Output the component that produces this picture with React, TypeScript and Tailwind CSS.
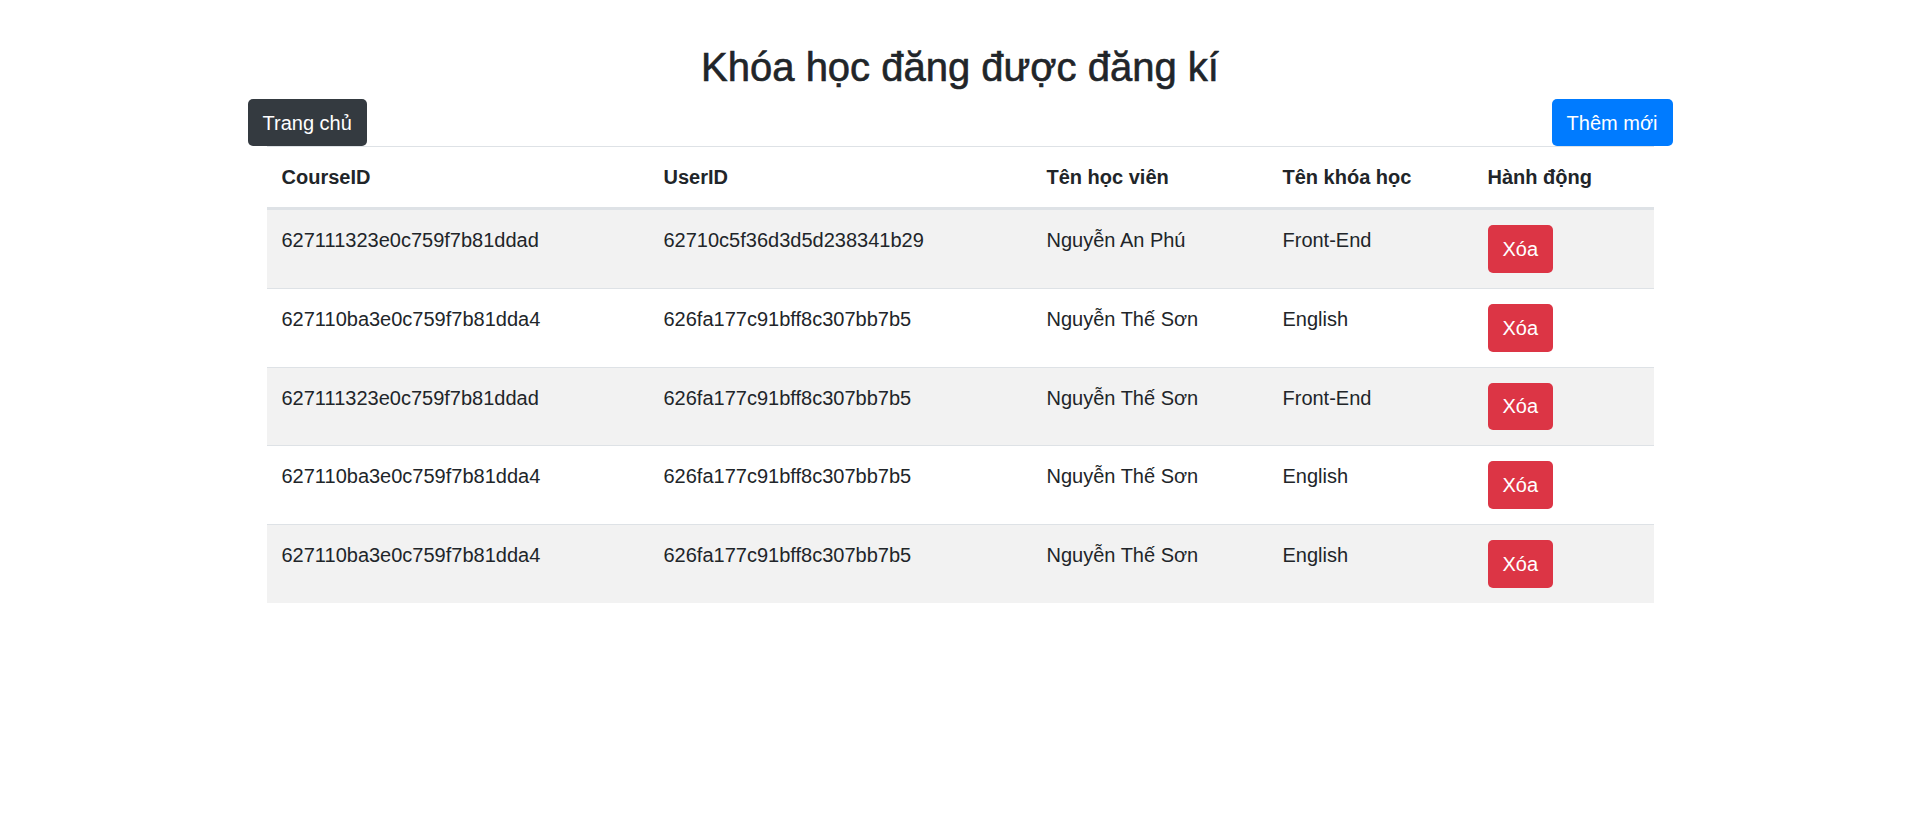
import React from 'react'

const rows = [
  { courseId: '627111323e0c759f7b81ddad', userId: '62710c5f36d3d5d238341b29', student: 'Nguyễn An Phú', course: 'Front-End' },
  { courseId: '627110ba3e0c759f7b81dda4', userId: '626fa177c91bff8c307bb7b5', student: 'Nguyễn Thế Sơn', course: 'English' },
  { courseId: '627111323e0c759f7b81ddad', userId: '626fa177c91bff8c307bb7b5', student: 'Nguyễn Thế Sơn', course: 'Front-End' },
  { courseId: '627110ba3e0c759f7b81dda4', userId: '626fa177c91bff8c307bb7b5', student: 'Nguyễn Thế Sơn', course: 'English' },
  { courseId: '627110ba3e0c759f7b81dda4', userId: '626fa177c91bff8c307bb7b5', student: 'Nguyễn Thế Sơn', course: 'English' },
]

export default function App() {
  return (
    <div className="min-h-[830px] bg-white text-[#212529] text-[20px] leading-[30px] font-['Liberation_Sans',Arial,sans-serif]">
      <h2 className="pt-[43px] text-center text-[40px] leading-[48px] font-medium [-webkit-text-stroke:0.6px_#212529]">
        Khóa học đăng được đăng kí
      </h2>

      <div className="mx-auto w-[1425px] px-[19px]">
        {/* Buttons */}
        <div className="-mx-[19px] flex justify-between items-end h-[48px] mt-[7px]">
          <button className="h-[47px] px-[15px] rounded-[5px] bg-[#343a40] text-white">
            Trang chủ
          </button>
          <button className="h-[47px] px-[15px] rounded-[5px] bg-[#007bff] text-white">
            Thêm mới
          </button>
        </div>

        {/* Table */}
        <table className="w-full border-collapse text-left">
          <colgroup>
            <col className="w-[382px]" />
            <col className="w-[383px]" />
            <col className="w-[236px]" />
            <col className="w-[205px]" />
            <col />
          </colgroup>
          <thead>
            <tr>
              {['CourseID', 'UserID', 'Tên học viên', 'Tên khóa học', 'Hành động'].map((h) => (
                <th
                  key={h}
                  className="border-t border-[#dee2e6] border-b-[3px] border-b-[#dee2e6] px-[15px] py-[15px] font-bold align-bottom"
                >
                  {h}
                </th>
              ))}
            </tr>
          </thead>
          <tbody>
            {rows.map((r, i) => (
              <tr key={i} className={i % 2 === 0 ? 'bg-[#f2f2f2]' : 'bg-white'}>
                <td className="border-t border-[#dee2e6] px-[15px] py-[15px] align-top">{r.courseId}</td>
                <td className="border-t border-[#dee2e6] px-[15px] py-[15px] align-top">{r.userId}</td>
                <td className="border-t border-[#dee2e6] px-[15px] py-[15px] align-top">{r.student}</td>
                <td className="border-t border-[#dee2e6] px-[15px] py-[15px] align-top">{r.course}</td>
                <td className="border-t border-[#dee2e6] px-[15px] py-[15px] align-top">
                  <button className="h-[47.75px] px-[15px] rounded-[5px] bg-[#dc3545] text-white">
                    Xóa
                  </button>
                </td>
              </tr>
            ))}
          </tbody>
        </table>
      </div>
    </div>
  )
}
